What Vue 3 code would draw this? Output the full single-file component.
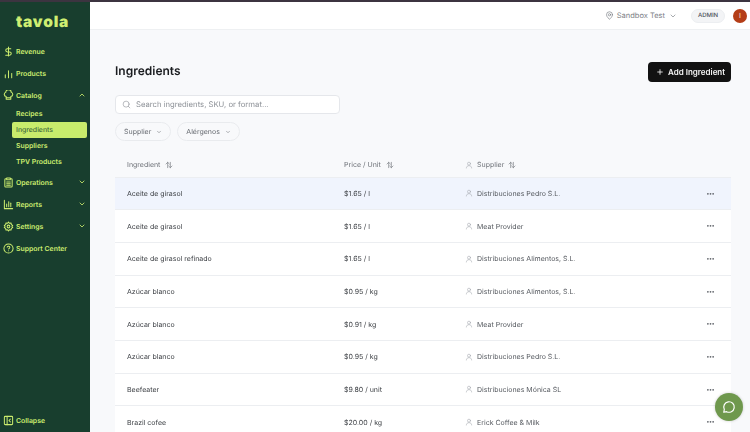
<template>
  <div class="page">
    <div class="top-strip" />
    <div class="shell">
      <aside class="sidebar">
        <div class="logo">tavola</div>
        <nav class="nav">
          <template v-for="item in navItems" :key="item.label">
            <div class="nav-item">
              <svg class="nav-icon" viewBox="0 0 24 24" fill="none" stroke="currentColor" stroke-width="2.200" stroke-linecap="round" stroke-linejoin="round">
                <path v-for="d in item.icon" :key="d" :d="d" />
              </svg>
              <span class="nav-label">{{ item.label }}</span>
              <svg v-if="item.chevron" class="nav-chevron" viewBox="0 0 24 24" fill="none" stroke="currentColor" stroke-width="2.500" stroke-linecap="round" stroke-linejoin="round">
                <path :d="item.chevron === 'up' ? 'M6 15l6-6 6 6' : 'M6 9l6 6 6-6'" />
              </svg>
            </div>
            <div v-if="item.children" class="sub-nav">
              <div
                v-for="child in item.children"
                :key="child"
                class="sub-item"
                :class="{ active: child === 'Ingredients' }"
              >
                {{ child }}
              </div>
            </div>
          </template>
        </nav>
        <div class="collapse">
          <svg class="nav-icon" viewBox="0 0 24 24" fill="none" stroke="currentColor" stroke-width="2.200" stroke-linecap="round" stroke-linejoin="round">
            <rect x="3" y="3" width="18" height="18" rx="2" />
            <path d="M9 3v18M16 9l-3 3 3 3" />
          </svg>
          <span class="nav-label">Collapse</span>
        </div>
      </aside>

      <div class="content">
        <header class="topbar">
          <svg class="pin" viewBox="0 0 24 24" fill="none" stroke="currentColor" stroke-width="1.800" stroke-linecap="round" stroke-linejoin="round">
            <path d="M20 10c0 6-8 12-8 12s-8-6-8-12a8 8 0 0 1 16 0z" />
            <circle cx="12" cy="10" r="3" />
          </svg>
          <span class="location">Sandbox Test</span>
          <svg class="location-chevron" viewBox="0 0 24 24" fill="none" stroke="currentColor" stroke-width="2" stroke-linecap="round" stroke-linejoin="round">
            <path d="M6 9l6 6 6-6" />
          </svg>
          <span class="role">ADMIN</span>
          <span class="avatar">I</span>
        </header>

        <main class="main">
          <div class="title-row">
            <h1 class="title">Ingredients</h1>
            <button class="add-btn">
              <svg class="plus" viewBox="0 0 24 24" fill="none" stroke="currentColor" stroke-width="2.500" stroke-linecap="round">
                <path d="M12 5v14M5 12h14" />
              </svg>
              Add Ingredient
            </button>
          </div>

          <div class="search">
            <svg class="search-icon" viewBox="0 0 24 24" fill="none" stroke="currentColor" stroke-width="1.600" stroke-linecap="round">
              <circle cx="11" cy="11" r="8" />
              <path d="M21 21l-4.300-4.300" />
            </svg>
            <span>Search ingredients, SKU, or format...</span>
          </div>

          <div class="filters">
            <div v-for="f in filters" :key="f" class="filter">
              {{ f }}
              <svg class="filter-chevron" viewBox="0 0 24 24" fill="none" stroke="currentColor" stroke-width="2" stroke-linecap="round" stroke-linejoin="round">
                <path d="M6 9l6 6 6-6" />
              </svg>
            </div>
          </div>

          <div class="table">
            <div class="row head">
              <div class="cell">
                Ingredient
                <svg class="sort" viewBox="0 0 24 24" fill="none" stroke="currentColor" stroke-width="2" stroke-linecap="round" stroke-linejoin="round">
                  <path d="M8 20V4M3 9l5-5 5 5M16 4v16M11 15l5 5 5-5" />
                </svg>
              </div>
              <div class="cell">
                Price / Unit
                <svg class="sort" viewBox="0 0 24 24" fill="none" stroke="currentColor" stroke-width="2" stroke-linecap="round" stroke-linejoin="round">
                  <path d="M8 20V4M3 9l5-5 5 5M16 4v16M11 15l5 5 5-5" />
                </svg>
              </div>
              <div class="cell supplier">
                <svg class="person" viewBox="0 0 24 24" fill="none" stroke="currentColor" stroke-width="1.800" stroke-linecap="round" stroke-linejoin="round">
                  <circle cx="12" cy="8" r="4.500" />
                  <path d="M4 21c0-4.500 3.500-7 8-7s8 2.500 8 7" />
                </svg>
                Supplier
                <svg class="sort" viewBox="0 0 24 24" fill="none" stroke="currentColor" stroke-width="2" stroke-linecap="round" stroke-linejoin="round">
                  <path d="M8 20V4M3 9l5-5 5 5M16 4v16M11 15l5 5 5-5" />
                </svg>
              </div>
              <div />
            </div>
            <div
              v-for="(row, i) in rows"
              :key="i"
              class="row body-row"
              :class="{ highlighted: i === 0 }"
            >
              <div class="cell name">{{ row.name }}</div>
              <div class="cell price">{{ row.price }}</div>
              <div class="cell supplier supplier-name">
                <svg class="person" viewBox="0 0 24 24" fill="none" stroke="currentColor" stroke-width="1.800" stroke-linecap="round" stroke-linejoin="round">
                  <circle cx="12" cy="8" r="4.500" />
                  <path d="M4 21c0-4.500 3.500-7 8-7s8 2.500 8 7" />
                </svg>
                {{ row.supplier }}
              </div>
              <svg class="dots" viewBox="0 0 8 4" fill="currentColor">
                <circle cx="1" cy="2" r="1" />
                <circle cx="4" cy="2" r="1" />
                <circle cx="7" cy="2" r="1" />
              </svg>
            </div>
          </div>
        </main>
      </div>
    </div>

    <button class="chat">
      <svg viewBox="0 0 24 24" fill="none" stroke="currentColor" stroke-width="2" stroke-linecap="round" stroke-linejoin="round">
        <path d="M7.900 20A9 9 0 1 0 4 16.100L3 21z" />
      </svg>
    </button>
  </div>
</template>

<script setup>
const navItems = [
  { label: 'Revenue', icon: ['M12 2v20', 'M17 6H9.500a3.500 3.500 0 0 0 0 7h5a3.500 3.500 0 0 1 0 7H6'] },
  { label: 'Products', icon: ['M5 21v-6', 'M12 21V6', 'M19 21v-9'] },
  {
    label: 'Catalog',
    chevron: 'up',
    icon: ['M7 14a4.500 4.500 0 0 1-1-8.800 6 6 0 0 1 12 0A4.500 4.500 0 0 1 17 14v6H7z', 'M7 17h10'],
    children: ['Recipes', 'Ingredients', 'Suppliers', 'TPV Products'],
  },
  {
    label: 'Operations',
    chevron: 'down',
    icon: ['M8 4H6a2 2 0 0 0-2 2v14a2 2 0 0 0 2 2h12a2 2 0 0 0 2-2V6a2 2 0 0 0-2-2h-2', 'M8 2h8v4H8z', 'M8 11h8', 'M8 14.500h8', 'M8 18h8'],
  },
  {
    label: 'Reports',
    chevron: 'down',
    icon: ['M3 3v18h18', 'M8 17v-6', 'M12.500 17V6', 'M17 17v-8'],
  },
  {
    label: 'Settings',
    chevron: 'down',
    icon: [
      'M12 2l2 3 3.500-.7.7 3.500 3 2-1.700 2.200 1.700 2.200-3 2-.7 3.500-3.500-.7-2 3-2-3-3.500.7-.7-3.500-3-2L4.500 12 2.800 9.800l3-2 .7-3.500 3.500.7z',
      'M12 9a3 3 0 1 0 0 6 3 3 0 0 0 0-6z',
    ],
  },
  {
    label: 'Support Center',
    icon: ['M12 22a10 10 0 1 0 0-20 10 10 0 0 0 0 20z', 'M9.100 9a3 3 0 0 1 5.800 1c0 2-3 3-3 3', 'M12 17h.01'],
  },
];

const filters = ['Supplier', 'Alérgenos'];

const rows = [
  { name: 'Aceite de girasol', price: '$1.65 / l', supplier: 'Distribuciones Pedro S.L.' },
  { name: 'Aceite de girasol', price: '$1.65 / l', supplier: 'Meat Provider' },
  { name: 'Aceite de girasol refinado', price: '$1.65 / l', supplier: 'Distribuciones Alimentos, S.L.' },
  { name: 'Azúcar blanco', price: '$0.95 / kg', supplier: 'Distribuciones Alimentos, S.L.' },
  { name: 'Azúcar blanco', price: '$0.91 / kg', supplier: 'Meat Provider' },
  { name: 'Azúcar blanco', price: '$0.95 / kg', supplier: 'Distribuciones Pedro S.L.' },
  { name: 'Beefeater', price: '$9.80 / unit', supplier: 'Distribuciones Mónica SL' },
  { name: 'Brazil cofee', price: '$20.00 / kg', supplier: 'Erick Coffee & Milk' },
];
</script>

<style>
html,
body {
  margin: 0;
  overflow: hidden;
}
</style>

<style scoped>
.page {
  position: relative;
  width: 750px;
  height: 432px;
  overflow: hidden;
  display: flex;
  flex-direction: column;
  font-family: Inter, "Liberation Sans", sans-serif;
  text-rendering: geometricPrecision;
  background: #f8f9fb;
}

.top-strip {
  height: 2px;
  flex-shrink: 0;
  background: #3c3440;
}

.shell {
  flex: 1;
  display: flex;
  min-height: 0;
}

.sidebar {
  width: 90px;
  flex-shrink: 0;
  display: flex;
  flex-direction: column;
  background: #183e2e;
  color: #cbec6e;
}

.logo {
  margin: 9px 0 0 16px;
  height: 22px;
  line-height: 22px;
  font-family: Inter, sans-serif;
  font-size: 15.500px;
  font-weight: 900;
  letter-spacing: 0.800px;
  color: #cfee72;
}

.nav {
  margin-top: 7px;
  display: flex;
  flex-direction: column;
}

.nav-item {
  height: 22px;
  display: flex;
  align-items: center;
  padding: 0 4px 0 3px;
  box-sizing: border-box;
}

.nav-icon {
  width: 11px;
  height: 11px;
  flex-shrink: 0;
}

.nav-label {
  margin-left: 2px;
  font-size: 6.900px;
  font-weight: 600;
  white-space: nowrap;
}

.nav-chevron {
  width: 8px;
  height: 8px;
  margin-left: auto;
  flex-shrink: 0;
}

.sub-nav {
  display: flex;
  flex-direction: column;
  margin-bottom: 1px;
}

.sub-item {
  height: 16px;
  line-height: 16px;
  margin: 0 3px 0 12px;
  padding-left: 4px;
  font-size: 6.900px;
  font-weight: 600;
  white-space: nowrap;
}

.sub-item.active {
  background: #c8ec6c;
  color: #3d6a3a;
  border-radius: 2px;
  font-weight: 500;
}

.collapse {
  margin-top: auto;
  margin-bottom: 7px;
  height: 10px;
  padding-left: 3px;
  display: flex;
  align-items: center;
}

.content {
  flex: 1;
  min-width: 0;
  display: flex;
  flex-direction: column;
}

.topbar {
  height: 28px;
  flex-shrink: 0;
  display: flex;
  align-items: center;
  justify-content: flex-end;
  padding-right: 3px;
  background: #fff;
  border-bottom: 1px solid #eef0f2;
  box-sizing: border-box;
  color: #7c8086;
}

.pin {
  width: 9px;
  height: 9px;
}

.location {
  margin-left: 3px;
  font-size: 7.500px;
}

.location-chevron {
  width: 8px;
  height: 8px;
  margin-left: 4px;
}

.role {
  margin-left: 14px;
  width: 34px;
  height: 14px;
  box-sizing: border-box;
  line-height: 12px;
  text-align: center;
  border-radius: 7px;
  background: #f3f4f6;
  border: 1px solid #eceef1;
  font-size: 6px;
  font-weight: 500;
  color: #4b5058;
}

.avatar {
  margin-left: 8px;
  width: 14px;
  height: 14px;
  border-radius: 50%;
  background: #b43d17;
  color: #f7e5d8;
  font-size: 7px;
  line-height: 14px;
  text-align: center;
}

.main {
  flex: 1;
  min-height: 0;
  padding: 32px 19px 0 25px;
  display: flex;
  flex-direction: column;
  will-change: transform;
}

.title-row {
  flex-shrink: 0;
  display: flex;
  align-items: flex-start;
  justify-content: space-between;
}

.title {
  margin: 0;
  font-size: 12px;
  line-height: 18px;
  font-weight: 600;
  color: #1b1d20;
}

.add-btn {
  display: flex;
  align-items: center;
  gap: 4px;
  width: 83px;
  height: 20px;
  padding: 0 0 0 8px;
  border: 0;
  border-radius: 4px;
  background: #121212;
  color: #f6f6f6;
  font-family: inherit;
  font-size: 8px;
  font-weight: 600;
  white-space: nowrap;
}

.plus {
  width: 8px;
  height: 8px;
}

.search {
  flex-shrink: 0;
  margin-top: 13px;
  width: 225px;
  height: 19px;
  box-sizing: border-box;
  display: flex;
  align-items: center;
  gap: 5px;
  padding-left: 6px;
  background: #fff;
  border: 1px solid #e5e7eb;
  border-radius: 4px;
  font-size: 7.700px;
  color: #8d9197;
}

.search-icon {
  width: 9px;
  height: 9px;
}

.filters {
  flex-shrink: 0;
  margin-top: 8px;
  display: flex;
  gap: 6px;
}

.filter {
  height: 19px;
  box-sizing: border-box;
  display: flex;
  align-items: center;
  gap: 5px;
  padding: 0 8px;
  border: 1px solid #e9ebee;
  border-radius: 10px;
  font-size: 7px;
  color: #666a70;
}

.filter-chevron {
  width: 6px;
  height: 6px;
}

.table {
  flex-shrink: 0;
  margin-top: 12px;
  display: flex;
  flex-direction: column;
}

.row {
  display: grid;
  grid-template-columns: 217px 121px 1fr 24px;
  padding-left: 12px;
  align-items: center;
  box-sizing: border-box;
  flex-shrink: 0;
}

.head {
  height: 24.500px;
  background: #f8f9fb;
  border-bottom: 1px solid #eceef1;
  font-size: 7px;
  color: #6e7278;
}

.body-row {
  height: 32.700px;
  background: #fff;
  border-bottom: 1px solid #eceef1;
  font-size: 7px;
  color: #3d4045;
}

.body-row.highlighted {
  background: #f0f4fd;
}

.cell {
  display: flex;
  align-items: center;
  gap: 5px;
  white-space: nowrap;
}

.supplier {
  gap: 4px;
}

.supplier-name {
  color: #55595f;
}

.sort {
  width: 8px;
  height: 8px;
  color: #74787e;
}

.person {
  width: 8px;
  height: 8px;
  color: #a7abb1;
}

.dots {
  width: 7px;
  height: 3.500px;
  color: #5f6369;
}

.chat {
  position: absolute;
  right: 7px;
  bottom: 11px;
  width: 28px;
  height: 28px;
  padding: 0;
  border: 0;
  border-radius: 50%;
  background: #6f984d;
  color: #fff;
  display: flex;
  align-items: center;
  justify-content: center;
  box-shadow: 0 0 3px rgba(0, 0, 0, 0.2);
}

.chat svg {
  width: 14px;
  height: 14px;
}
</style>
